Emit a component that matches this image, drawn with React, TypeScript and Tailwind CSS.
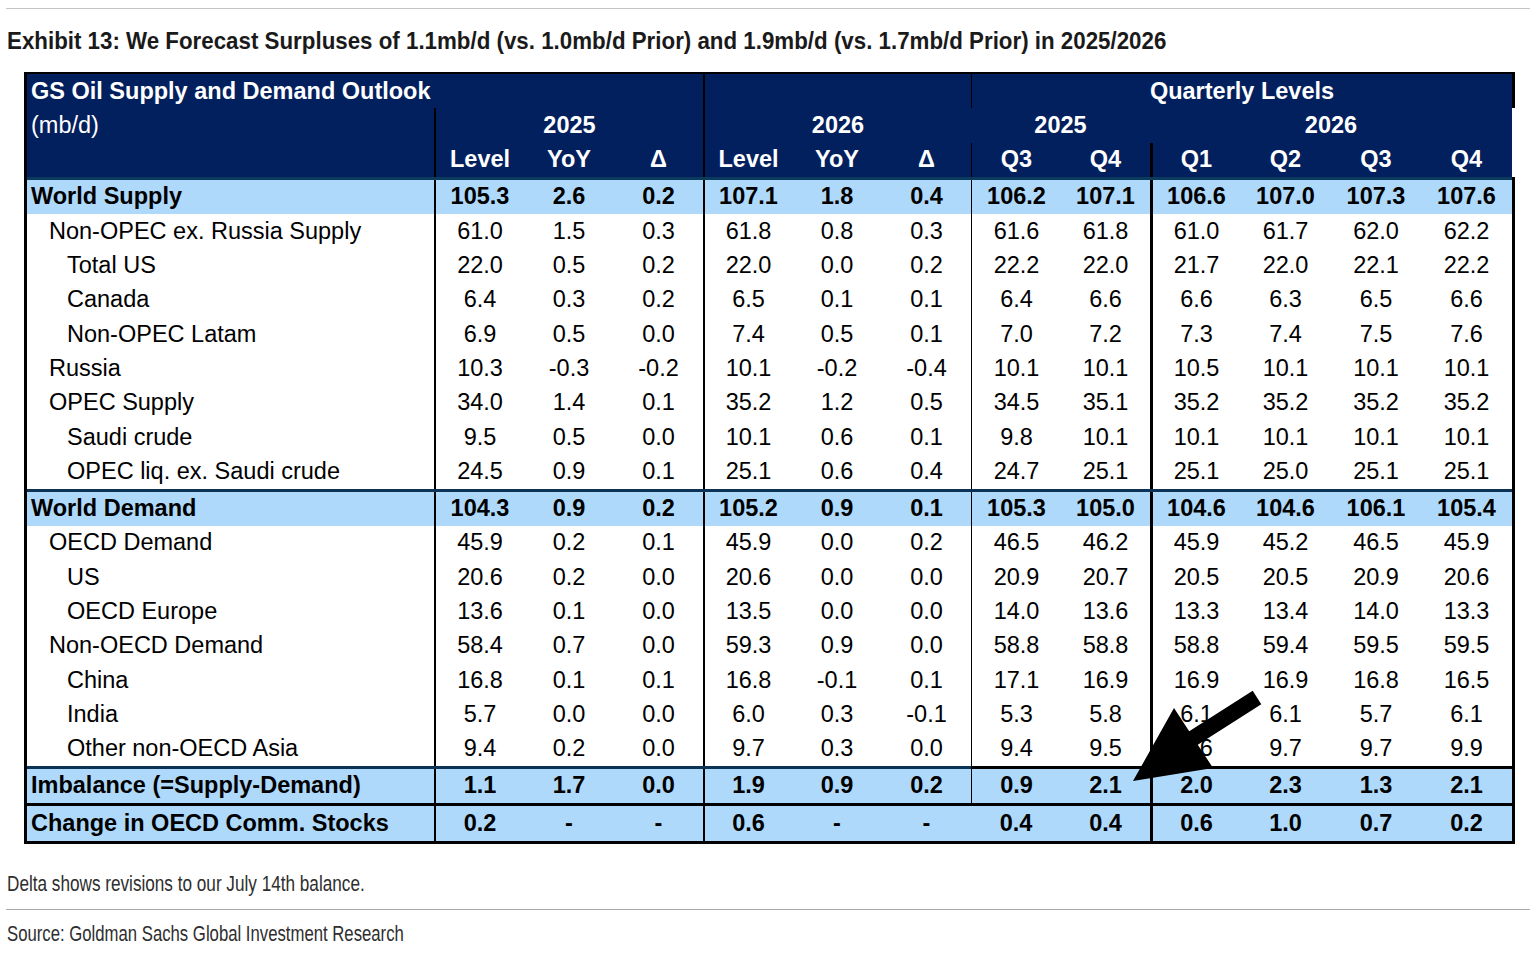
import React from 'react';

type Row = { label: string; indent: 0 | 1 | 2; bold?: boolean; vals: string[] };

const supply: Row[] = [
  { label: 'World Supply', indent: 0, bold: true, vals: ['105.3', '2.6', '0.2', '107.1', '1.8', '0.4', '106.2', '107.1', '106.6', '107.0', '107.3', '107.6'] },
  { label: 'Non-OPEC ex. Russia Supply', indent: 1, vals: ['61.0', '1.5', '0.3', '61.8', '0.8', '0.3', '61.6', '61.8', '61.0', '61.7', '62.0', '62.2'] },
  { label: 'Total US', indent: 2, vals: ['22.0', '0.5', '0.2', '22.0', '0.0', '0.2', '22.2', '22.0', '21.7', '22.0', '22.1', '22.2'] },
  { label: 'Canada', indent: 2, vals: ['6.4', '0.3', '0.2', '6.5', '0.1', '0.1', '6.4', '6.6', '6.6', '6.3', '6.5', '6.6'] },
  { label: 'Non-OPEC Latam', indent: 2, vals: ['6.9', '0.5', '0.0', '7.4', '0.5', '0.1', '7.0', '7.2', '7.3', '7.4', '7.5', '7.6'] },
  { label: 'Russia', indent: 1, vals: ['10.3', '-0.3', '-0.2', '10.1', '-0.2', '-0.4', '10.1', '10.1', '10.5', '10.1', '10.1', '10.1'] },
  { label: 'OPEC Supply', indent: 1, vals: ['34.0', '1.4', '0.1', '35.2', '1.2', '0.5', '34.5', '35.1', '35.2', '35.2', '35.2', '35.2'] },
  { label: 'Saudi crude', indent: 2, vals: ['9.5', '0.5', '0.0', '10.1', '0.6', '0.1', '9.8', '10.1', '10.1', '10.1', '10.1', '10.1'] },
  { label: 'OPEC liq. ex. Saudi crude', indent: 2, vals: ['24.5', '0.9', '0.1', '25.1', '0.6', '0.4', '24.7', '25.1', '25.1', '25.0', '25.1', '25.1'] },
];

const demand: Row[] = [
  { label: 'World Demand', indent: 0, bold: true, vals: ['104.3', '0.9', '0.2', '105.2', '0.9', '0.1', '105.3', '105.0', '104.6', '104.6', '106.1', '105.4'] },
  { label: 'OECD Demand', indent: 1, vals: ['45.9', '0.2', '0.1', '45.9', '0.0', '0.2', '46.5', '46.2', '45.9', '45.2', '46.5', '45.9'] },
  { label: 'US', indent: 2, vals: ['20.6', '0.2', '0.0', '20.6', '0.0', '0.0', '20.9', '20.7', '20.5', '20.5', '20.9', '20.6'] },
  { label: 'OECD Europe', indent: 2, vals: ['13.6', '0.1', '0.0', '13.5', '0.0', '0.0', '14.0', '13.6', '13.3', '13.4', '14.0', '13.3'] },
  { label: 'Non-OECD Demand', indent: 1, vals: ['58.4', '0.7', '0.0', '59.3', '0.9', '0.0', '58.8', '58.8', '58.8', '59.4', '59.5', '59.5'] },
  { label: 'China', indent: 2, vals: ['16.8', '0.1', '0.1', '16.8', '-0.1', '0.1', '17.1', '16.9', '16.9', '16.9', '16.8', '16.5'] },
  { label: 'India', indent: 2, vals: ['5.7', '0.0', '0.0', '6.0', '0.3', '-0.1', '5.3', '5.8', '6.1', '6.1', '5.7', '6.1'] },
  { label: 'Other non-OECD Asia', indent: 2, vals: ['9.4', '0.2', '0.0', '9.7', '0.3', '0.0', '9.4', '9.5', '9.6', '9.7', '9.7', '9.9'] },
];

const imbalance: Row = { label: 'Imbalance (=Supply-Demand)', indent: 0, bold: true, vals: ['1.1', '1.7', '0.0', '1.9', '0.9', '0.2', '0.9', '2.1', '2.0', '2.3', '1.3', '2.1'] };
const stocks: Row = { label: 'Change in OECD Comm. Stocks', indent: 0, bold: true, vals: ['0.2', '-', '-', '0.6', '-', '-', '0.4', '0.4', '0.6', '1.0', '0.7', '0.2'] };

// column widths, borders included (label 27->434, data 434->1512)
const cols = [
  'w-[90px] border-l-2 border-black',
  'w-[90px]',
  'w-[89px]',
  'w-[89px] border-l-2 border-black',
  'w-[90px]',
  'w-[89px]',
  'w-[90px] border-l-[1.5px] border-black',
  'w-[89px]',
  'w-[90px] border-l-[3px] border-black',
  'w-[91px]',
  'w-[90px]',
  'w-[91px]',
];
const colsNoQ = [...cols.slice(0, 6), 'w-[90px]', ...cols.slice(7)];

const indentCls = ['pl-[4px]', 'pl-[22px]', 'pl-[40px]'];

function DataRow({ row, noQLine }: { row: Row; noQLine?: boolean }) {
  const c = noQLine ? colsNoQ : cols;
  return (
    <div className={`flex h-[34.3px] border-r-[3px] border-black ${row.bold ? 'bg-[#aed9fb] font-bold' : 'bg-white'}`}>
      <div className={`w-[407px] flex items-center whitespace-nowrap ${indentCls[row.indent]}`}>{row.label}</div>
      {row.vals.map((v, i) => (
        <div key={i} className={`${c[i]} flex items-center justify-center`}>{v}</div>
      ))}
    </div>
  );
}

function Arrow() {
  return (
    <svg className="absolute left-0 top-0 pointer-events-none" width="1530" height="956" viewBox="0 0 1530 956">
      <polygon
        points="1252.7,690.8 1261.3,704.2 1197.8,744.7 1213,768 1133,781 1174,708 1189.2,731.3"
        fill="#000"
      />
    </svg>
  );
}

export default function App() {
  return (
    <div className="relative w-[1530px] h-[956px] bg-white text-black font-['Liberation_Sans',Arial,sans-serif] overflow-hidden">
      <div className="pt-[8px]">
        <div className="ml-[6px] h-px bg-[#c4c4c4]" />
      </div>

      {/* Title */}
      <div className="h-[63px] flex items-center pl-[7px]">
        <span className="inline-block origin-left scale-x-[0.93] whitespace-nowrap text-[24px] font-bold text-[#1a1a1a]">
          Exhibit 13: We Forecast Surpluses of 1.1mb/d (vs. 1.0mb/d Prior) and 1.9mb/d (vs. 1.7mb/d Prior) in 2025/2026
        </span>
      </div>

      {/* Table */}
      <div className="ml-[24px] w-[1491px] border-l-[3px] border-t-2 border-black text-[23.5px]">
        {/* Header */}
        <div className="bg-[#03205e] text-white font-bold">
          <div className="flex h-[34.3px] border-r-[3px] border-black">
            <div className="w-[676px] pl-[4px] flex items-center whitespace-nowrap">GS Oil Supply and Demand Outlook</div>
            <div className="w-[268px] border-l-2 border-black" />
            <div className="w-[541px] border-l-[1.5px] border-black flex items-center justify-center">Quarterly Levels</div>
          </div>
          <div className="flex h-[34.3px] border-r-[3px] border-white">
            <div className="w-[407px] pl-[4px] flex items-center font-normal">(mb/d)</div>
            <div className="w-[269px] border-l-2 border-black flex items-center justify-center">2025</div>
            <div className="w-[268px] border-l-2 border-black flex items-center justify-center">2026</div>
            <div className="w-[179px] flex items-center justify-center">2025</div>
            <div className="w-[362px] flex items-center justify-center">2026</div>
          </div>
          <div className="flex h-[34.3px] border-r-[3px] border-white">
            <div className="w-[407px]" />
            {['Level', 'YoY', 'Δ', 'Level', 'YoY', 'Δ', 'Q3', 'Q4', 'Q1', 'Q2', 'Q3', 'Q4'].map((h, i) => (
              <div key={i} className={`${cols[i]} flex items-center justify-center`}>{h}</div>
            ))}
          </div>
        </div>
        <div className="h-[3px] bg-[#0c3a5c] border-r-[3px] border-black" />

        {supply.map((r) => (
          <DataRow key={r.label} row={r} />
        ))}
        <div className="h-[3px] bg-[#0c3356] border-r-[3px] border-black" />

        {demand.map((r) => (
          <DataRow key={r.label} row={r} />
        ))}
        <div className="flex h-[3px]">
          <div className="w-[944px] bg-[#0c3356]" />
          <div className="flex-1 bg-black" />
        </div>

        <DataRow row={imbalance} />
        <div className="h-[3px] bg-black" />
        <DataRow row={stocks} noQLine />
        <div className="h-[3px] bg-black" />
      </div>

      {/* Footer */}
      <div className="mt-[28px] h-[24px] pl-[7px] flex items-center">
        <span className="inline-block origin-left scale-x-[0.78] whitespace-nowrap text-[22px] text-[#2e2e2e]">
          Delta shows revisions to our July 14th balance.
        </span>
      </div>
      <div className="mt-[13px] ml-[6px] h-px bg-[#a8a8a8]" />
      <div className="mt-[12px] h-[24px] pl-[7px] flex items-center">
        <span className="inline-block origin-left scale-x-[0.76] whitespace-nowrap text-[22px] text-[#2e2e2e]">
          Source: Goldman Sachs Global Investment Research
        </span>
      </div>

      <Arrow />
    </div>
  );
}
